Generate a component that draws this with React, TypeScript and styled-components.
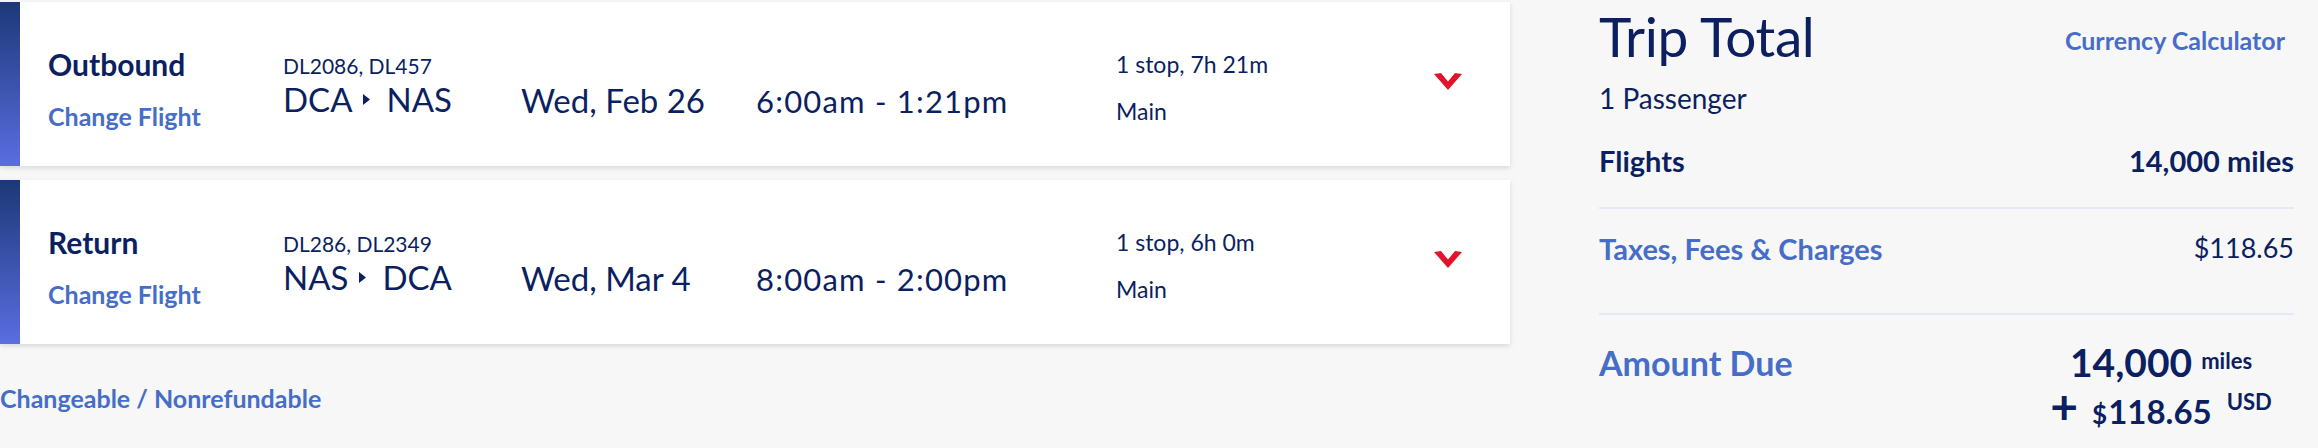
import styled, { createGlobalStyle } from "styled-components";

const GlobalStyle = createGlobalStyle`
  body {
    margin: 0;
    background: #f7f7f8;
    font-family: Lato, "Open Sans", sans-serif;
    color: #0b1f61;
  }
`;

const Page = styled.div`
  display: flex;
  gap: 89px;
  width: 2318px;
`;

const FlightsColumn = styled.div`
  width: 1510px;
  padding-top: 2px;
  display: flex;
  flex-direction: column;
`;

const Card = styled.div`
  display: flex;
  height: 164px;
  background: #ffffff;
  box-shadow: 0 2px 5px rgba(0, 0, 0, 0.13);
  & + & {
    margin-top: 14px;
  }
`;

const AccentBar = styled.div`
  width: 20px;
  background: linear-gradient(180deg, #1d3877 0%, #5a6ee0 100%);
`;

const CardBody = styled.div`
  flex: 1;
  display: grid;
  grid-template-columns: 235px 238px 235px 360px 318px 28px;
  align-items: start;
  padding-left: 28px;
`;

const Cell = styled.div<{ $top: number }>`
  padding-top: ${(p) => p.$top}px;
  display: flex;
  flex-direction: column;
`;

const Direction = styled.div`
  font-size: 30px;
  line-height: 36px;
  font-weight: 700;
`;

const LinkText = styled.div<{ $size: number; $gap?: number }>`
  font-size: ${(p) => p.$size}px;
  line-height: 1.2;
  font-weight: 700;
  color: #466ec8;
  margin-top: ${(p) => p.$gap ?? 0}px;
`;

const FlightNumbers = styled.div`
  font-size: 21px;
  line-height: 1.2;
`;

const Route = styled.div`
  display: flex;
  align-items: center;
  font-size: 33px;
  line-height: 1.2;
  margin-top: 2px;
`;

const RouteArrow = styled.svg`
  width: 7px;
  height: 11px;
  margin: 0 16px 0 11px;
`;

const BigText = styled.div<{ $size: number; $spacing?: number }>`
  font-size: ${(p) => p.$size}px;
  line-height: 1.2;
  letter-spacing: ${(p) => p.$spacing ?? 0}px;
  white-space: nowrap;
`;

const Detail = styled.div<{ $gap?: number }>`
  font-size: 23px;
  line-height: 1.2;
  margin-top: ${(p) => p.$gap ?? 0}px;
`;

const Chevron = styled.svg`
  width: 28px;
  height: 17px;
  display: block;
`;

const Footnote = styled(LinkText)`
  margin-top: 39px;
`;

const Summary = styled.div`
  width: 695px;
  padding-top: 3px;
  display: flex;
  flex-direction: column;
`;

const SummaryHeader = styled.div`
  display: flex;
  justify-content: space-between;
  align-items: flex-start;
`;

const Title = styled.h1`
  margin: 0;
  font-size: 55px;
  line-height: 1.2;
  font-weight: 400;
  letter-spacing: -0.4px;
`;

const HeaderLink = styled(LinkText)`
  margin-top: 22px;
  margin-right: 9px;
`;

const Passengers = styled.div`
  font-size: 28px;
  line-height: 1.2;
  margin-top: 13px;
`;

const Line = styled.div<{ $top: number; $bottom: number; $divider?: boolean }>`
  display: flex;
  justify-content: space-between;
  align-items: flex-start;
  padding-top: ${(p) => p.$top}px;
  padding-bottom: ${(p) => p.$bottom}px;
  border-bottom: ${(p) => (p.$divider ? "2px solid #e4e9f3" : "none")};
`;

const LineLabel = styled.div<{ $blue?: boolean; $size: number }>`
  font-size: ${(p) => p.$size}px;
  line-height: 1.2;
  font-weight: 700;
  color: ${(p) => (p.$blue ? "#466ec8" : "#0b1f61")};
`;

const LineValue = styled.div<{ $bold?: boolean; $size: number }>`
  font-size: ${(p) => p.$size}px;
  line-height: 1.2;
  font-weight: ${(p) => (p.$bold ? 700 : 400)};
`;

const DueValue = styled.div`
  width: 266px;
  display: flex;
  flex-direction: column;
  align-items: center;
  font-weight: 700;
`;

const DueRow = styled.div`
  display: flex;
  align-items: baseline;
`;

const Amount = styled.span<{ $size: number }>`
  font-size: ${(p) => p.$size}px;
  line-height: 1;
`;

const Unit = styled.span<{ $top: number; $left: number }>`
  align-self: flex-start;
  font-size: 22px;
  line-height: 1;
  margin-top: ${(p) => p.$top}px;
  margin-left: ${(p) => p.$left}px;
`;

const Plus = styled.span`
  font-size: 48px;
  line-height: 1;
  margin-right: 14px;
`;

const Dollar = styled.span`
  font-size: 26px;
  line-height: 1;
  margin-right: 1px;
`;

type Leg = {
  direction: string;
  numbers: string;
  from: string;
  to: string;
  date: string;
  time: string;
  stops: string;
};

const legs: Leg[] = [
  {
    direction: "Outbound",
    numbers: "DL2086, DL457",
    from: "DCA",
    to: "NAS",
    date: "Wed, Feb 26",
    time: "6:00am - 1:21pm",
    stops: "1 stop, 7h 21m",
  },
  {
    direction: "Return",
    numbers: "DL286, DL2349",
    from: "NAS",
    to: "DCA",
    date: "Wed, Mar 4",
    time: "8:00am - 2:00pm",
    stops: "1 stop, 6h 0m",
  },
];

const LegCard = ({ leg }: { leg: Leg }) => (
  <Card>
    <AccentBar />
    <CardBody>
      <Cell $top={44}>
        <Direction>{leg.direction}</Direction>
        <LinkText $size={25} $gap={19}>Change Flight</LinkText>
      </Cell>
      <Cell $top={51}>
        <FlightNumbers>{leg.numbers}</FlightNumbers>
        <Route>
          {leg.from}
          <RouteArrow viewBox="0 0 7 11">
            <polygon points="0,0 7,5.5 0,11" fill="#0b1f61" />
          </RouteArrow>
          {leg.to}
        </Route>
      </Cell>
      <Cell $top={79}>
        <BigText $size={33}>{leg.date}</BigText>
      </Cell>
      <Cell $top={81}>
        <BigText $size={31} $spacing={1.2}>{leg.time}</BigText>
      </Cell>
      <Cell $top={49}>
        <Detail>{leg.stops}</Detail>
        <Detail $gap={19}>Main</Detail>
      </Cell>
      <Cell $top={71}>
        <Chevron viewBox="0 0 28 17">
          <polygon points="0,1 7,0 14,8.5 21,0 28,1 14,17" fill="#e3132c" />
        </Chevron>
      </Cell>
    </CardBody>
  </Card>
);

const App = () => {
  return (
    <>
      <GlobalStyle />
      <Page>
        <FlightsColumn>
          {legs.map((leg) => (
            <LegCard key={leg.direction} leg={leg} />
          ))}
          <Footnote $size={25}>Changeable / Nonrefundable</Footnote>
        </FlightsColumn>

        <Summary>
          <SummaryHeader>
            <Title>Trip Total</Title>
            <HeaderLink $size={25}>Currency Calculator</HeaderLink>
          </SummaryHeader>
          <Passengers>1 Passenger</Passengers>
          <Line $top={28} $bottom={29} $divider>
            <LineLabel $size={29}>Flights</LineLabel>
            <LineValue $size={29} $bold>14,000 miles</LineValue>
          </Line>
          <Line $top={23} $bottom={46} $divider>
            <LineLabel $size={29} $blue>Taxes, Fees &amp; Charges</LineLabel>
            <LineValue $size={27}>$118.65</LineValue>
          </Line>
          <Line $top={28} $bottom={0}>
            <LineLabel $size={34} $blue>Amount Due</LineLabel>
            <DueValue>
              <DueRow>
                <Amount $size={39}>14,000</Amount>
                <Unit $top={7} $left={9}>miles</Unit>
              </DueRow>
              <DueRow>
                <Plus>+</Plus>
                <Dollar>$</Dollar>
                <Amount $size={33}>118.65</Amount>
                <Unit $top={9} $left={15}>USD</Unit>
              </DueRow>
            </DueValue>
          </Line>
        </Summary>
      </Page>
    </>
  );
};

export default App;
